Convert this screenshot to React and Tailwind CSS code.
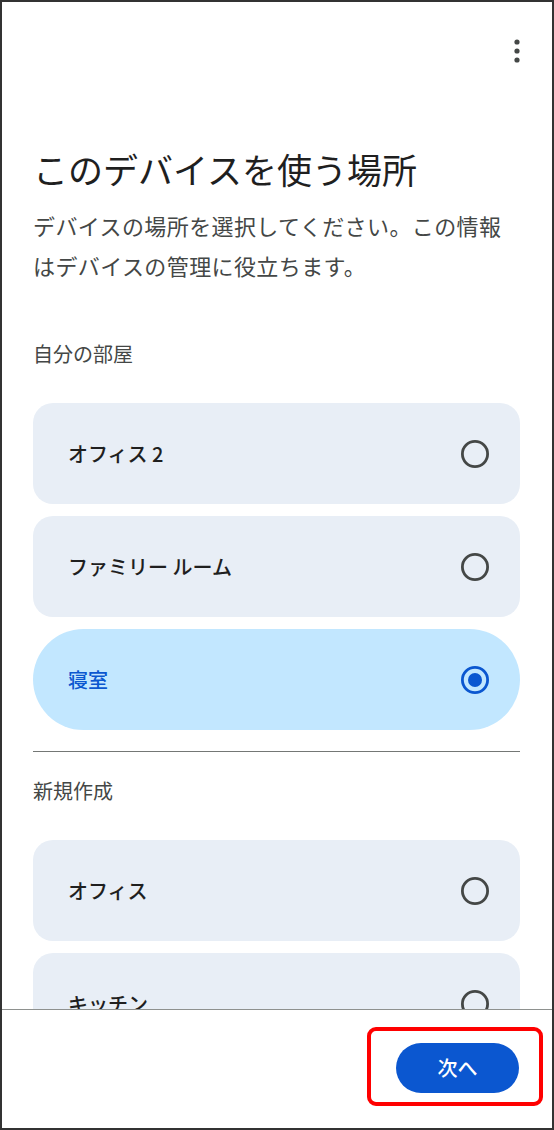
import React from "react";

const FONT = { fontFamily: '"Noto Sans CJK JP", "Noto Sans", Roboto, sans-serif' };

function Radio({ selected }) {
  if (selected) {
    return (
      <svg width="28" height="28" viewBox="0 0 28 28" className="shrink-0">
        <circle cx="14" cy="14" r="12.6" fill="none" stroke="#0b57d0" strokeWidth="2.8" />
        <circle cx="14" cy="14" r="7" fill="#0b57d0" />
      </svg>
    );
  }
  return (
    <svg width="28" height="28" viewBox="0 0 28 28" className="shrink-0">
      <circle cx="14" cy="14" r="12.6" fill="none" stroke="#444746" strokeWidth="2.8" />
    </svg>
  );
}

function Option({ label, selected }) {
  return (
    <div
      className={
        "flex h-[101px] items-center justify-between pl-[35px] pr-[31px] " +
        (selected ? "rounded-[51px] bg-[#c2e7ff]" : "rounded-[20px] bg-[#e8eef6]")
      }
    >
      <span
        className={
          "text-[20px] leading-[28px] font-medium " +
          (selected ? "text-[#0b57d0]" : "text-[#1f1f1f]")
        }
      >
        {label}
      </span>
      <Radio selected={selected} />
    </div>
  );
}

export default function App() {
  return (
    <div
      className="relative flex h-[1130px] w-[554px] flex-col overflow-hidden border-2 border-[#333333] bg-white"
      style={FONT}
    >
      <div className="flex-1 overflow-hidden">
        <div className="flex h-[147px] justify-end pr-[23px] pt-[37px]">
          <svg width="24" height="24" viewBox="0 0 24 24">
            <circle cx="12" cy="3" r="2.6" fill="#444746" />
            <circle cx="12" cy="12" r="2.6" fill="#444746" />
            <circle cx="12" cy="21" r="2.6" fill="#444746" />
          </svg>
        </div>
        <div className="pl-[31px] pr-[32px]">
          <h1 className="text-[35px] leading-[40px] font-normal text-[#1f1f1f]">
            このデバイスを使う場所
          </h1>
          <p className="mt-[16px] text-[22px] leading-[40px] tracking-[0.4px] text-[#444746]">
            デバイスの場所を選択してください。この情報
            <br />
            はデバイスの管理に役立ちます。
          </p>
          <div className="mt-[55px] text-[20px] leading-[28px] text-[#444746]">自分の部屋</div>
          <div className="mt-[35px] flex flex-col gap-[12px]">
            <Option label="オフィス 2" />
            <Option label="ファミリー ルーム" />
            <Option label="寝室" selected />
          </div>
          <div className="mt-[21px] h-px bg-[#747775]" />
          <div className="mt-[25px] text-[20px] leading-[28px] text-[#444746]">新規作成</div>
          <div className="mt-[35px] flex flex-col gap-[12px]">
            <Option label="オフィス" />
            <Option label="キッチン" />
          </div>
        </div>
      </div>
      <div className="flex h-[119px] shrink-0 justify-end border-t border-[#8e918f] bg-white pr-[33px] pt-[33px]">
        <button className="flex h-[50px] w-[123px] items-center justify-center rounded-full bg-[#0b57d0] text-[20px] font-medium text-white">
          次へ
        </button>
      </div>
      <div className="pointer-events-none absolute left-[365px] top-[1025px] h-[79px] w-[176px] rounded-[9px] border-4 border-[#ff0000]" />
    </div>
  );
}
